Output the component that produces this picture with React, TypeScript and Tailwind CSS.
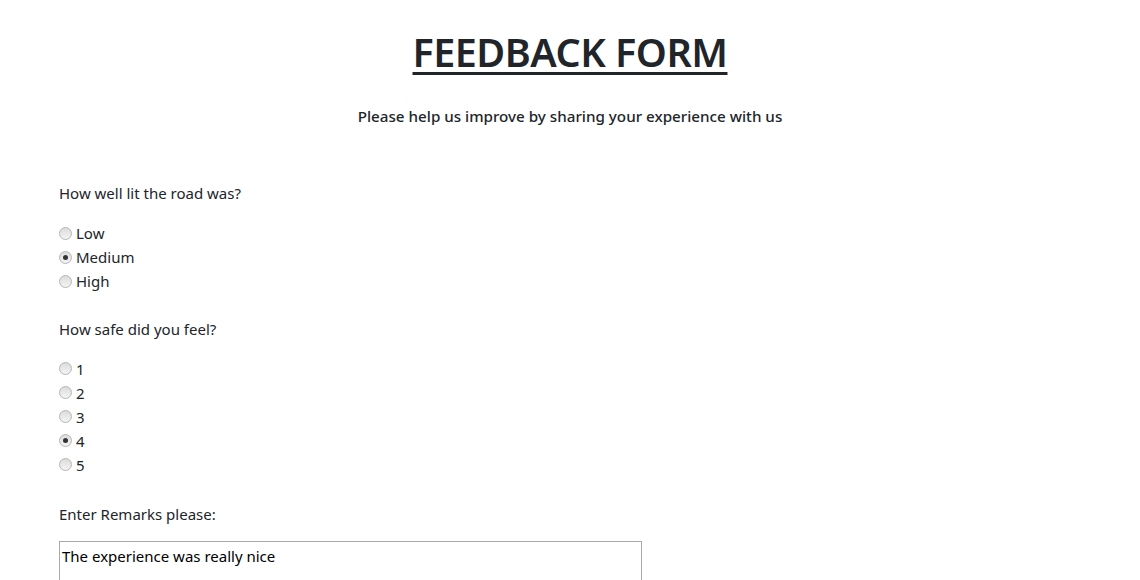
import { useState } from "react";

function Radio({ label, checked, onClick }: { label: string; checked: boolean; onClick: () => void }) {
    return (
        <label className="flex items-center h-6 cursor-pointer" onClick={onClick}>
            <span className="w-[13px] h-[13px] rounded-full border border-[#b5b5b5] bg-gradient-to-b from-[#dcdcdc] to-[#f4f4f4] flex items-center justify-center mr-[4px]">
                {checked && <span className="w-[5px] h-[5px] rounded-full bg-[#333]" />}
            </span>
            <span>{label}</span>
        </label>
    );
}

export default function App() {
    const [lit, setLit] = useState('Medium');
    const [safe, setSafe] = useState('4');
    const [remarks, setRemarks] = useState('The experience was really nice');

    return (
        <div className="min-h-screen bg-white text-[#212529] font-['Noto_Sans',sans-serif] text-[15px]">
            <div className="text-center pt-[26px]">
                <h1 className="text-[39.5px] font-semibold underline underline-offset-[5px] decoration-[3px] leading-[52px] tracking-[-0.5px]">FEEDBACK FORM</h1>
                <p className="mt-[27px] font-medium text-[15.2px]">Please help us improve by sharing your experience with us</p>
            </div>

            <form className="px-[59px] pt-[54px]">
                <p className="mb-[17px]">How well lit the road was?</p>
                {['Low', 'Medium', 'High'].map(v => (
                    <Radio key={v} label={v} checked={lit === v} onClick={() => setLit(v)} />
                ))}

                <p className="mt-[25px] mb-[16px]">How safe did you feel?</p>
                {['1', '2', '3', '4', '5'].map(v => (
                    <Radio key={v} label={v} checked={safe === v} onClick={() => setSafe(v)} />
                ))}

                <p className="mt-[26px] mb-[16px]">Enter Remarks please:</p>
                <textarea
                    value={remarks}
                    onChange={e => setRemarks(e.target.value)}
                    className="block w-[583px] h-[80px] border border-[#a9a9a9] px-[2px] py-[3px] text-[15px] text-black resize-none focus:outline-none"
                />
            </form>
        </div>
    );
}
